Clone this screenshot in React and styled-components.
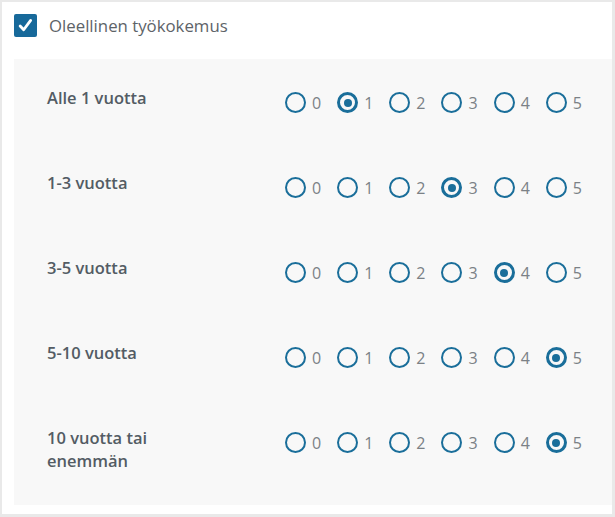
import React from "react";
import styled, { createGlobalStyle } from "styled-components";

const Global = createGlobalStyle`
  html, body {
    margin: 0;
    padding: 0;
    background: #e9e9e9;
  }
  body {
    font-family: "Open Sans", "Liberation Sans", sans-serif;
  }
`;

const Frame = styled.div`
  width: 615px;
  height: 517px;
  box-sizing: border-box;
  padding: 2px 3px 3px 2px;
`;

const Card = styled.section`
  background: #fff;
  height: 100%;
  box-sizing: border-box;
  padding: 0 0 9px 12px;
  display: flex;
  flex-direction: column;
`;

const Header = styled.label`
  display: flex;
  align-items: center;
  gap: 12px;
  height: 57px;
  box-sizing: border-box;
  padding-bottom: 10px;
  font-size: 16.8px;
  color: #5d6368;
`;

const CheckBox = styled.span`
  width: 23px;
  height: 23px;
  border-radius: 2px;
  background: #17699a;
  display: flex;
  align-items: center;
  justify-content: center;
`;

const Panel = styled.div`
  flex: 1;
  background: #f8f8f8;
  padding: 27px 0 0 33px;
  display: grid;
  grid-template-columns: 238px auto;
  row-gap: 58px;
  align-content: start;
`;

const RowLabel = styled.div`
  font-size: 16.5px;
  font-weight: 600;
  line-height: 23px;
  color: #535c64;
  width: 130px;
`;

const Options = styled.div`
  display: flex;
  gap: 16px;
  margin-top: 6px;
`;

const Option = styled.label`
  display: flex;
  align-items: center;
  gap: 6px;
  font-size: 16px;
  color: #7b8186;
  height: 21px;
`;

const Circle = styled.span`
  width: 21px;
  height: 21px;
  box-sizing: border-box;
  border-radius: 50%;
  border: ${(p) => (p.$on ? "3px" : "2px")} solid #1a6e9a;
  display: flex;
  align-items: center;
  justify-content: center;
  &::after {
    content: "";
    display: ${(p) => (p.$on ? "block" : "none")};
    width: 8px;
    height: 8px;
    border-radius: 50%;
    background: #1a6e9a;
  }
`;

const rows = [
  { label: "Alle 1 vuotta", value: 1 },
  { label: "1-3 vuotta", value: 3 },
  { label: "3-5 vuotta", value: 4 },
  { label: "5-10 vuotta", value: 5 },
  { label: "10 vuotta tai enemmän", value: 5 },
];

export default function App() {
  return (
    <Frame>
      <Global />
      <Card>
        <Header>
          <CheckBox>
            <svg width="15" height="15" viewBox="0 0 14 14">
              <path d="M2 7.5 L5.3 11 L11.8 2.2" fill="none" stroke="#fff" strokeWidth="2.6" strokeLinecap="round" strokeLinejoin="round" />
            </svg>
          </CheckBox>
          Oleellinen työkokemus
        </Header>
        <Panel>
          {rows.map((r) => (
            <React.Fragment key={r.label}>
              <RowLabel>{r.label}</RowLabel>
              <Options>
                {[0, 1, 2, 3, 4, 5].map((n) => (
                  <Option key={n}>
                    <Circle $on={n === r.value} />
                    {n}
                  </Option>
                ))}
              </Options>
            </React.Fragment>
          ))}
        </Panel>
      </Card>
    </Frame>
  );
}
